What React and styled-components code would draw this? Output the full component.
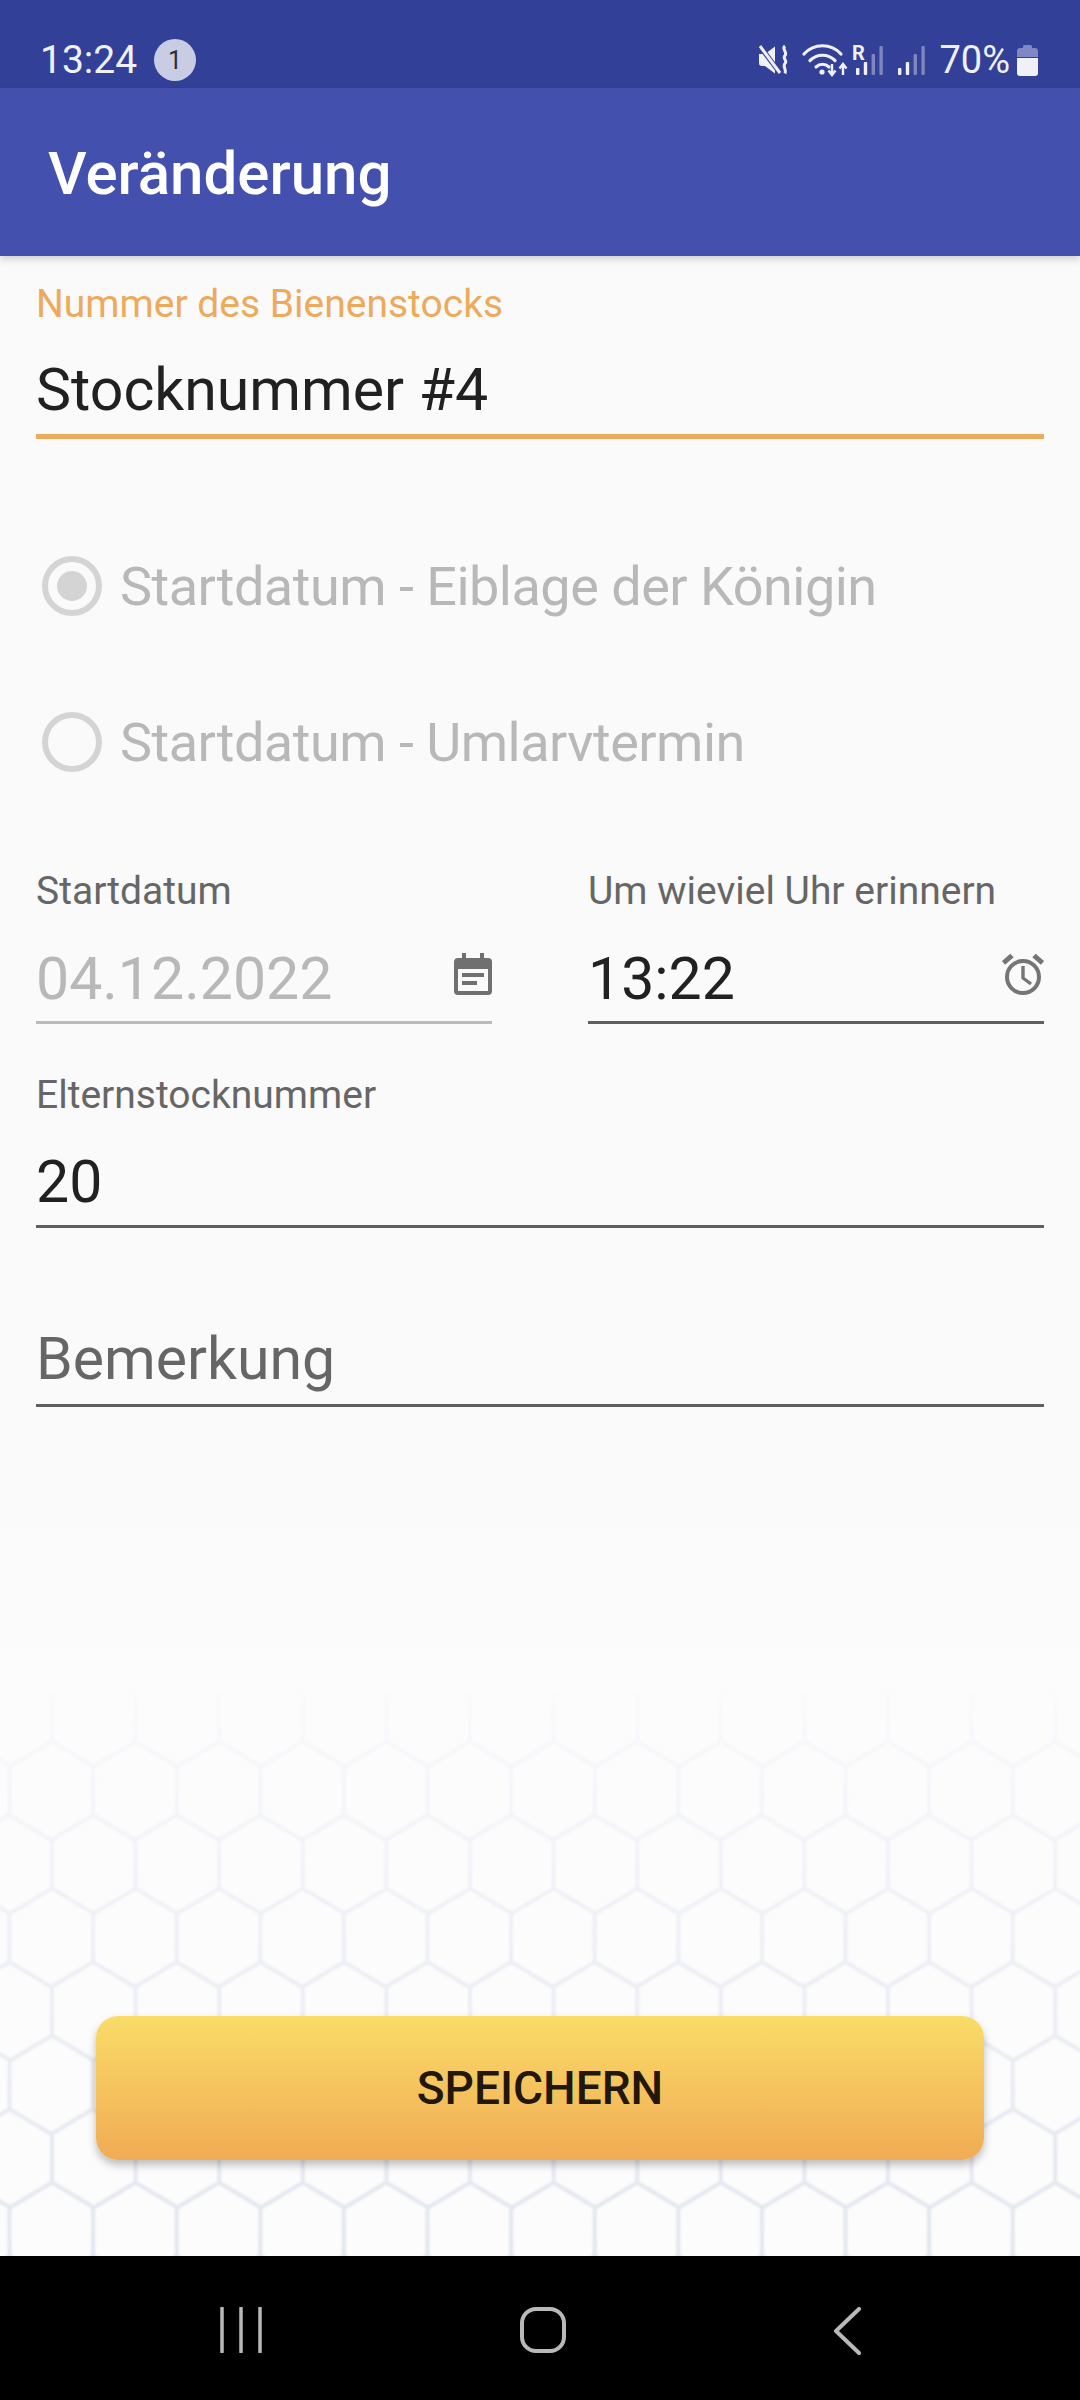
import React from 'react';
import styled, { createGlobalStyle } from 'styled-components';

const GlobalStyle = createGlobalStyle`
  html, body {
    margin: 0;
    padding: 0;
    background: #fafafa;
  }
  * {
    box-sizing: border-box;
  }
`;

const Page = styled.div`
  display: flex;
  flex-direction: column;
  width: 1080px;
  height: 2400px;
  overflow: hidden;
  font-family: Roboto, 'Noto Sans', sans-serif;
`;

const StatusBar = styled.div`
  display: flex;
  align-items: center;
  justify-content: space-between;
  flex-shrink: 0;
  height: 88px;
  padding: 32px 42px 0 40px;
  background: #334098;
  color: #f0f1f8;
`;

const StatusGroup = styled.div`
  display: flex;
  align-items: center;
`;

const Clock = styled.span`
  font-size: 39px;
  line-height: 44px;
`;

const NotifBadge = styled.span`
  display: flex;
  align-items: center;
  justify-content: center;
  width: 42px;
  height: 42px;
  margin-left: 17px;
  border-radius: 50%;
  background: #c9cde4;
  color: #2b2d3a;
  font-size: 25px;
`;

const BatteryText = styled.span`
  margin: 0 7px 0 13px;
  font-size: 38px;
  line-height: 44px;
`;

const StatusIcon = styled.svg`
  display: block;
  flex-shrink: 0;
  margin-left: ${(p) => p.$gap || 0}px;
  overflow: visible;
`;

const AppBar = styled.header`
  position: relative;
  z-index: 2;
  flex-shrink: 0;
  height: 168px;
  padding: 3px 48px 0;
  background: #4350ae;
  box-shadow: 0 3px 8px rgba(0, 0, 0, 0.18);
  color: #ffffff;
  font-size: 60px;
  font-weight: 500;
  line-height: 165px;
`;

const Main = styled.main`
  position: relative;
  display: flex;
  flex: 1;
  flex-direction: column;
  padding: 0 36px;
  background: linear-gradient(#fafafa 0, #fafafa 1270px, #fcfcfd 1400px);
`;

const HexBackdrop = styled.svg`
  position: absolute;
  left: 0;
  bottom: 0;
  display: block;
`;

const Form = styled.div`
  position: relative;
  display: flex;
  flex-direction: column;
`;

const Field = styled.div`
  flex: 1;
  min-width: 0;
  margin-top: ${(p) => p.$top || 0}px;
`;

const FieldLabel = styled.div`
  color: ${(p) => (p.$focus ? '#edaa5a' : '#666666')};
  font-size: 39px;
  line-height: 48px;
`;

const InputRow = styled.div`
  display: flex;
  align-items: center;
  justify-content: space-between;
  height: ${(p) => p.$height}px;
  padding-top: ${(p) => p.$pad}px;
  border-bottom: ${(p) => (p.$focus ? 5 : 3)}px solid
    ${(p) => (p.$focus ? '#edaa5a' : p.$disabled ? '#bbbbbb' : '#5f5f5f')};
`;

const InputValue = styled.span`
  color: ${(p) => (p.$hint ? '#666666' : p.$disabled ? '#b8b8b8' : '#212121')};
  font-size: 59px;
  line-height: 72px;
`;

const FieldIcon = styled.svg`
  display: block;
  flex-shrink: 0;
  margin-top: -10px;
`;

const RadioRow = styled.div`
  display: flex;
  align-items: center;
  height: 60px;
  margin-top: ${(p) => p.$top}px;
  padding-left: 6px;
  color: #b8b8b8;
  font-size: 54px;
  letter-spacing: -0.5px;
`;

const RadioMark = styled.span`
  display: flex;
  align-items: center;
  justify-content: center;
  flex-shrink: 0;
  width: 60px;
  height: 60px;
  margin-right: 18px;
  border: 6px solid #d4d4d4;
  border-radius: 50%;

  &::after {
    content: '';
    display: ${(p) => (p.$checked ? 'block' : 'none')};
    width: 30px;
    height: 30px;
    border-radius: 50%;
    background: #d4d4d4;
  }
`;

const TwoColumns = styled.div`
  display: flex;
  gap: 96px;
`;

const SaveButton = styled.button`
  position: absolute;
  left: 96px;
  bottom: 96px;
  width: 888px;
  height: 144px;
  padding: 0;
  border: none;
  border-radius: 22px;
  background: linear-gradient(#f9dc68, #f1ab54);
  box-shadow: 0 5px 9px rgba(0, 0, 0, 0.25);
  color: #21170a;
  font-family: inherit;
  font-size: 46px;
  font-weight: 500;
`;

const NavBar = styled.nav`
  display: flex;
  flex-shrink: 0;
  height: 144px;
  padding-top: 51px;
  background: #000000;
`;

const NavSlot = styled.div`
  display: flex;
  flex-shrink: 0;
  justify-content: center;
  width: ${(p) => p.$width}px;
`;

function MuteIcon() {
  return (
    <StatusIcon width="30" height="30" viewBox="0 0 30 30">
      <path d="M0 9h6l10-7.500v27L6 21H3a3 3 0 0 1-3-3z" fill="#f0f1f8" />
      <path d="M0 0l21 28" stroke="#334098" strokeWidth="5" />
      <path d="M1 1l20 27" stroke="#f0f1f8" strokeWidth="3" />
      <path d="M26 1c-4 3 3 6 0 9.500-3 3 3 5 0 8-3 3 2 6 0 10" fill="none" stroke="#f0f1f8" strokeWidth="3" />
    </StatusIcon>
  );
}

function WifiIcon() {
  return (
    <StatusIcon $gap={14} width="45" height="34" viewBox="0 0 45 34">
      <g fill="none" stroke="#f0f1f8" strokeWidth="3.200" strokeLinecap="round">
        <path d="M1 11c10-11 27-11 37 0" />
        <path d="M7 17.500c7-7 18-7 25 0" />
        <path d="M13 24c4-3.500 9-3.500 13 0" />
      </g>
      <circle cx="19" cy="29" r="2.600" fill="#f0f1f8" />
      <path d="M29 21v11m-3.500-4.500l3.500 4.500 3.500-4.500M40 32V21m-3.500 4.500L40 21l3.500 4.500" fill="none" stroke="#f0f1f8" strokeWidth="2.400" />
    </StatusIcon>
  );
}

function SignalIcon({ roaming, bright, gap }) {
  const heights = [7, 13, 21, 29];
  return (
    <StatusIcon $gap={gap} width="32" height="34" viewBox="0 0 32 34">
      {heights.map((h, i) => (
        <rect
          key={h}
          x={4 + i * 7.8}
          y={32 - h}
          width="3.4"
          height={h}
          rx="1"
          fill="#f0f1f8"
          opacity={i < bright ? 1 : 0.4}
        />
      ))}
      {roaming && (
        <text x="0" y="17" fill="#f0f1f8" fontSize="20" fontWeight="700" fontFamily="Roboto, sans-serif">
          R
        </text>
      )}
    </StatusIcon>
  );
}

function BatteryIcon() {
  return (
    <StatusIcon width="21" height="32" viewBox="0 0 21 32">
      <path d="M6 4V2.500A1.500 1.500 0 0 1 7.500 1h6A1.500 1.500 0 0 1 15 2.500V4h3a3 3 0 0 1 3 3v6H0V7a3 3 0 0 1 3-3z" fill="#7f88c4" />
      <path d="M0 14h21v15a3 3 0 0 1-3 3H3a3 3 0 0 1-3-3z" fill="#f0f1f8" />
    </StatusIcon>
  );
}

function CalendarIcon() {
  return (
    <FieldIcon width="38" height="42" viewBox="0 0 38 42">
      <path
        d="M8 0h4v5h14V0h4v5h4a4 4 0 0 1 4 4v29a4 4 0 0 1-4 4H4a4 4 0 0 1-4-4V9a4 4 0 0 1 4-4h4zM4 16v22h30V16z"
        fill="#707070"
        fillRule="evenodd"
      />
      <path d="M8 20h22v4H8zM8 28h15v4H8z" fill="#707070" />
    </FieldIcon>
  );
}

function AlarmIcon() {
  return (
    <FieldIcon width="42" height="42" viewBox="0 0 42 42">
      <circle cx="21" cy="24" r="16" fill="none" stroke="#757575" strokeWidth="4" />
      <path d="M21 13v12l8 6" fill="none" stroke="#757575" strokeWidth="3.400" />
      <path d="M1.500 10L10 2.500M40.500 10L32 2.500" fill="none" stroke="#757575" strokeWidth="5" />
    </FieldIcon>
  );
}

function HexPattern() {
  const segments = [];
  for (let row = 0; row < 9; row += 1) {
    const top = 20 + row * 73.5;
    const startX = row % 2 === 0 ? 52 : 9.5;
    for (let col = -1; col < 14; col += 1) {
      const x = startX + col * 83.6;
      segments.push(`M${x} ${top}v48.500l41.800 25M${x} ${top + 48.5}l-41.800 25`);
    }
  }
  return (
    <HexBackdrop width="1080" height="583" viewBox="0 0 1080 583">
      <defs>
        <linearGradient id="hexFade" gradientUnits="userSpaceOnUse" x1="0" y1="0" x2="0" y2="583">
          <stop offset="0" stopColor="#e6e9f2" stopOpacity="0.08" />
          <stop offset="0.45" stopColor="#e6e9f2" stopOpacity="0.65" />
          <stop offset="1" stopColor="#dfe3ec" stopOpacity="0.9" />
        </linearGradient>
        <filter id="hexSoft" x="0" y="0" width="1" height="1">
          <feGaussianBlur stdDeviation="0.8" />
        </filter>
      </defs>
      <path d={segments.join('')} fill="none" stroke="url(#hexFade)" strokeWidth="4" filter="url(#hexSoft)" />
    </HexBackdrop>
  );
}

export default function App() {
  return (
    <>
      <GlobalStyle />
      <Page>
        <StatusBar>
          <StatusGroup>
            <Clock>13:24</Clock>
            <NotifBadge>1</NotifBadge>
          </StatusGroup>
          <StatusGroup>
            <MuteIcon />
            <WifiIcon />
            <SignalIcon roaming bright={2} gap={4} />
            <SignalIcon bright={2} gap={10} />
            <BatteryText>70%</BatteryText>
            <BatteryIcon />
          </StatusGroup>
        </StatusBar>
        <AppBar>Veränderung</AppBar>
        <Main>
          <HexPattern />
          <Form>
            <Field $top={24}>
              <FieldLabel $focus>Nummer des Bienenstocks</FieldLabel>
              <InputRow $focus $height={111} $pad={18}>
                <InputValue>Stocknummer #4</InputValue>
              </InputRow>
            </Field>
            <RadioRow $top={117}>
              <RadioMark $checked />
              Startdatum - Eiblage der Königin
            </RadioRow>
            <RadioRow $top={96}>
              <RadioMark />
              Startdatum - Umlarvtermin
            </RadioRow>
            <TwoColumns>
              <Field $top={95}>
                <FieldLabel>Startdatum</FieldLabel>
                <InputRow $disabled $height={109} $pad={22}>
                  <InputValue $disabled>04.12.2022</InputValue>
                  <CalendarIcon />
                </InputRow>
              </Field>
              <Field $top={95}>
                <FieldLabel>Um wieviel Uhr erinnern</FieldLabel>
                <InputRow $height={109} $pad={22}>
                  <InputValue>13:22</InputValue>
                  <AlarmIcon />
                </InputRow>
              </Field>
            </TwoColumns>
            <Field $top={47}>
              <FieldLabel>Elternstocknummer</FieldLabel>
              <InputRow $height={109} $pad={20}>
                <InputValue>20</InputValue>
              </InputRow>
            </Field>
            <Field $top={68}>
              <InputRow $height={111} $pad={18}>
                <InputValue $hint>Bemerkung</InputValue>
              </InputRow>
            </Field>
          </Form>
          <SaveButton type="button">SPEICHERN</SaveButton>
        </Main>
        <NavBar>
          <NavSlot $width={482}>
            <svg width="42" height="46" viewBox="0 0 42 46">
              <path d="M2 1v44M21 1v44M40 1v44" stroke="#b9b9b9" strokeWidth="3.500" strokeLinecap="round" />
            </svg>
          </NavSlot>
          <NavSlot $width={122}>
            <svg width="46" height="46" viewBox="0 0 46 46">
              <rect x="2" y="2" width="42" height="42" rx="14" fill="none" stroke="#b9b9b9" strokeWidth="4" />
            </svg>
          </NavSlot>
          <NavSlot $width={485}>
            <svg width="28" height="48" viewBox="0 0 28 48">
              <path d="M26 2L3 24l23 22" fill="none" stroke="#b9b9b9" strokeWidth="4" strokeLinecap="round" strokeLinejoin="round" />
            </svg>
          </NavSlot>
        </NavBar>
      </Page>
    </>
  );
}
